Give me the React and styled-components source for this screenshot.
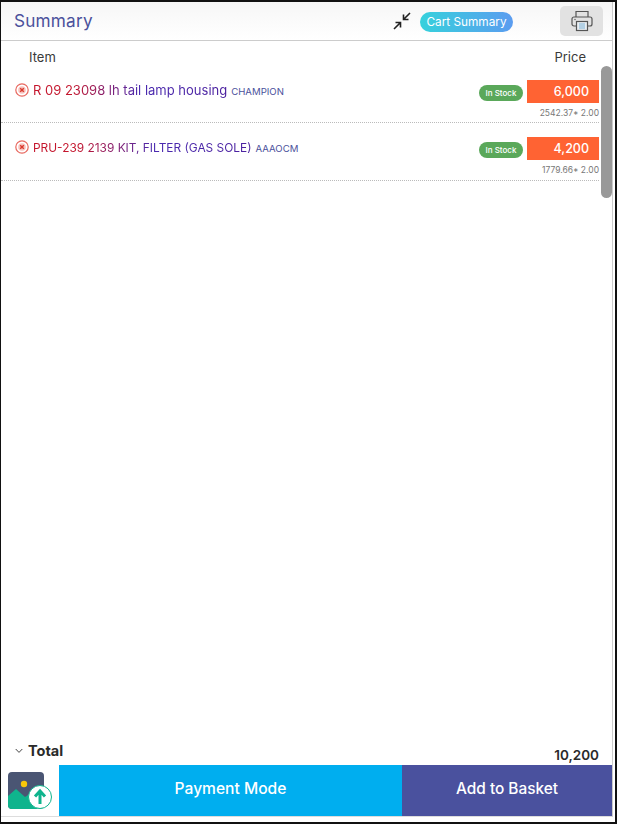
import React from 'react';
import styled, { createGlobalStyle } from 'styled-components';

const GlobalStyle = createGlobalStyle`
  html, body { margin: 0; padding: 0; background: #fff; }
  body { font-family: Inter, "Liberation Sans", sans-serif; }
  * { box-sizing: border-box; }
`

const Frame = styled.div`
  width: 617px;
  height: 824px;
  border: 2px solid #111;
  border-left-width: 1px;
  background: #fff;
  padding-right: 2px;
  padding-bottom: 5px;
`
const Panel = styled.div`
  height: 100%;
  display: flex;
  flex-direction: column;
  border-right: 1px solid #ccc;
  border-bottom: 1px solid #ddd;
`
const Header = styled.div`
  height: 39px;
  flex: none;
  display: flex;
  align-items: center;
  padding: 0 9px 0 13px;
  border-bottom: 1px solid #ccc;
  background: linear-gradient(#f6f6f6, #fff);
`
const Title = styled.div`
  font-size: 17.2px;
  color: #4b519c;
  flex: 1;
  padding-bottom: 2px;
  letter-spacing: 0.2px;
`
const Pill = styled.div`
  width: 93px;
  height: 20px;
  margin: 2px 47px 0 8px;
  border-radius: 10px;
  background: linear-gradient(90deg, #36d1dc, #5b9cf0);
  color: #fff;
  font-size: 11.8px;
  line-height: 20px;
  text-align: center;
`
const PrintButton = styled.div`
  width: 43px;
  height: 30px;
  border-radius: 5px;
  background: #e2e2e2;
  display: flex;
  align-items: center;
  justify-content: center;
`
const Body = styled.div`
  flex: 1;
  position: relative;
  overflow: hidden;
  padding-right: 13px;
`
const Scrollbar = styled.div`
  position: absolute;
  top: 25px;
  right: 0;
  width: 11px;
  height: 132px;
  border-radius: 6px;
  background: #999;
`
const ColumnHead = styled.div`
  display: flex;
  justify-content: space-between;
  padding: 8px 13px 0 28px;
  height: 26px;
  font-size: 13px;
  color: #3a3a3a;
`
const Row = styled.div`
  height: ${p => p.$height}px;
  display: flex;
  align-items: flex-start;
  justify-content: space-between;
  padding: ${p => p.$top}px 0 0 14px;
  border-bottom: 1px dotted #bbb;
`
const ItemName = styled.div`
  display: flex;
  align-items: center;
  gap: 4px;
  height: 20px;
`
const GradientText = styled.span`
  font-size: ${p => p.$size}px;
  background: linear-gradient(90deg, #c4152c 20%, #4a2ab0 55%, #4b209f);
  -webkit-background-clip: text;
  background-clip: text;
  color: transparent;
`
const Brand = styled.span`
  font-size: 9.6px;
  color: #4b519c;
  padding-top: 2px;
`
const PriceCol = styled.div`
  display: flex;
  flex-direction: column;
  align-items: flex-end;
`
const PriceLine = styled.div`
  display: flex;
  align-items: center;
  gap: 4px;
`
const Stock = styled.span`
  width: 44px;
  height: 16px;
  margin-top: 2px;
  border-radius: 8px;
  background: #5aa85a;
  color: #fff;
  font-size: 8px;
  font-weight: 500;
  line-height: 16px;
  text-align: center;
`
const PriceBox = styled.span`
  width: 72px;
  height: 23px;
  padding-right: 10px;
  background: #ff6333;
  color: #fff;
  font-size: 12.5px;
  font-weight: 500;
  line-height: 23px;
  text-align: right;
`
const Calc = styled.span`
  margin-top: 5px;
  font-size: 8.5px;
  color: #777;
`
const TotalBar = styled.div`
  height: 28px;
  flex: none;
  display: flex;
  justify-content: space-between;
  align-items: flex-start;
  padding: 5px 13px 0 14px;
  color: #2a2a2a;
  font-weight: 700;
`
const TotalLabel = styled.div`
  display: flex;
  align-items: center;
  gap: 5px;
  font-size: 14.5px;
`
const TotalValue = styled.div`
  font-size: 13.5px;
  font-weight: 600;
  padding-top: 5px;
`
const Footer = styled.div`
  height: 51px;
  flex: none;
  display: flex;
`
const UploadCell = styled.div`
  width: 58px;
  display: flex;
  align-items: center;
  padding-left: 7px;
`
const ActionButton = styled.div`
  width: ${p => p.$width}px;
  background: ${p => p.$bg};
  color: #fff;
  font-size: ${p => p.$size}px;
  font-weight: 500;
  text-align: center;
  line-height: 48px;
`

const RemoveIcon = () => (
  <svg width="14" height="14" viewBox="0 0 14 14">
    <circle cx="7" cy="7" r="6.2" fill="#fff" stroke="#e8685f" strokeWidth="1.2" />
    <circle cx="7" cy="7" r="3.8" fill="#f7c4bf" />
    <path d="M5.2 5.2l3.6 3.6M8.8 5.2l-3.6 3.6" stroke="#d9382c" strokeWidth="1.4" />
  </svg>
)

const CollapseIcon = () => (
  <svg width="20" height="20" viewBox="0 0 20 20" fill="none" stroke="#222" strokeWidth="1.6">
    <path d="M2 18l6-6M3.5 11.5H8.5V16.5" />
    <path d="M18 2l-6 6M11.5 3.5V8.5H16.5" />
  </svg>
)

const PrinterIcon = () => (
  <svg width="22" height="22" viewBox="0 0 22 22" fill="none">
    <path d="M5 7V1.5h12V7" stroke="#555" strokeWidth="1.2" />
    <path d="M5 16H3a2 2 0 0 1-2-2V9a2 2 0 0 1 2-2h16a2 2 0 0 1 2 2v5a2 2 0 0 1-2 2h-2" stroke="#555" strokeWidth="1.2" />
    <rect x="5.5" y="11.5" width="11" height="9" fill="#e9eef2" stroke="#555" strokeWidth="1.2" />
    <path d="M8 14h6M8 16h6M8 18h6" stroke="#7fb2d6" strokeWidth="1.2" />
    <circle cx="4" cy="9.5" r=".7" fill="#555" />
  </svg>
)

const ChevronIcon = () => (
  <svg width="8" height="6" viewBox="0 0 8 6" fill="none" stroke="#444" strokeWidth="1">
    <path d="M.7 1l3.3 3.4L7.3 1" />
  </svg>
)

const UploadIcon = () => (
  <svg width="45" height="38" viewBox="0 0 45 38">
    <rect x="0" y="0" width="36" height="37" rx="4" fill="#4a5573" />
    <circle cx="16" cy="12" r="3.2" fill="#f8c80a" />
    <path d="M0 24l8-7 9 8 6-4 13 7v5a4 4 0 0 1-4 4H4a4 4 0 0 1-4-4z" fill="#0fb48d" />
    <circle cx="32" cy="25" r="11.5" fill="#fff" stroke="#0fb48d" strokeWidth="1" />
    <path d="M32 32V20M27 24.5l5-5.5 5 5.5" fill="none" stroke="#0fb48d" strokeWidth="3" />
  </svg>
)

const items = [
  { name: 'R 09 23098 lh tail lamp housing', brand: 'CHAMPION', price: '6,000', calc: '2542.37* 2.00', height: 56, top: 13, size: 13 },
  { name: 'PRU-239 2139 KIT, FILTER (GAS SOLE)', brand: 'AAAOCM', price: '4,200', calc: '1779.66* 2.00', height: 58, top: 14, size: 11.9 },
]

export default function App() {
  return (
    <Frame>
      <GlobalStyle />
      <Panel>
        <Header>
          <Title>Summary</Title>
          <CollapseIcon />
          <Pill>Cart Summary</Pill>
          <PrintButton><PrinterIcon /></PrintButton>
        </Header>
        <Body>
          <ColumnHead>
            <span>Item</span>
            <span>Price</span>
          </ColumnHead>
          {items.map(item => (
            <Row key={item.name} $height={item.height} $top={item.top}>
              <ItemName>
                <RemoveIcon />
                <GradientText $size={item.size}>{item.name}</GradientText>
                <Brand>{item.brand}</Brand>
              </ItemName>
              <PriceCol>
                <PriceLine>
                  <Stock>In Stock</Stock>
                  <PriceBox>{item.price}</PriceBox>
                </PriceLine>
                <Calc>{item.calc}</Calc>
              </PriceCol>
            </Row>
          ))}
          <Scrollbar />
        </Body>
        <TotalBar>
          <TotalLabel><ChevronIcon />Total</TotalLabel>
          <TotalValue>10,200</TotalValue>
        </TotalBar>
        <Footer>
          <UploadCell><UploadIcon /></UploadCell>
          <ActionButton $width={343} $bg="#00aeef" $size={15.6}>Payment Mode</ActionButton>
          <ActionButton $width={210} $bg="#4a519e" $size={15.4}>Add to Basket</ActionButton>
        </Footer>
      </Panel>
    </Frame>
  )
}
